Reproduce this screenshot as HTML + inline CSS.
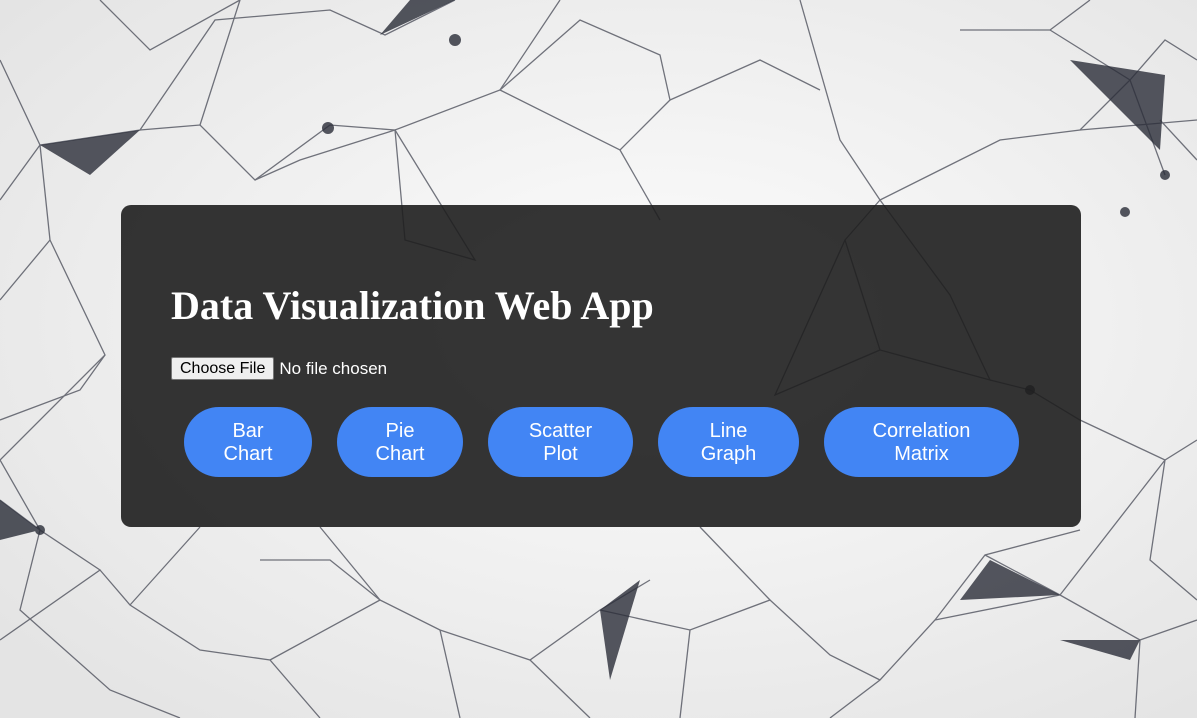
<!DOCTYPE html>
<html><head><meta charset="utf-8"><style>
html,body{margin:0;padding:0;width:1197px;height:718px;overflow:hidden;background:#f0f0f0;font-family:"Liberation Sans",Arial,sans-serif}
#bg{position:absolute;left:0;top:0}
.panel{position:absolute;left:121px;top:205px;width:960px;height:322px;background:rgba(30,30,30,0.9);border-radius:10px}
h1{position:absolute;left:50px;top:78px;margin:0;font-family:"Liberation Serif",serif;font-weight:bold;font-size:40px;color:#fff;line-height:46px;white-space:nowrap}
.file{position:absolute;left:50px;top:152px;font-size:17px;color:#fff;display:flex;align-items:center}
.file span.b{display:inline-block;background:#efefef;color:#000;border:1px solid #767676;border-radius:2px;padding:1px 8px;font-size:16px;line-height:19px;margin-right:5px}
.btn{position:absolute;top:202px;height:70px;background:#4285f4;border-radius:35px;color:#fff;font-size:20px;line-height:23px;text-align:center;display:flex;align-items:center;justify-content:center;padding-top:2px;box-sizing:border-box}
</style></head><body>
<svg id="bg" width="1197" height="718" viewBox="0 0 1197 718">
<defs><radialGradient id="g" cx="55%" cy="45%" r="70%"><stop offset="0" stop-color="#fdfdfd"/><stop offset="1" stop-color="#e4e4e4"/></radialGradient></defs>
<rect width="1197" height="718" fill="url(#g)"/>
<g stroke="#3a3d4a" stroke-width="1.3" fill="none" opacity="0.7">
<polyline points="0,60 40,145 140,130 215,20 330,10 385,35 455,0"/>
<polyline points="40,145 50,240 105,355 0,460 40,530 100,570 0,640"/>
<polyline points="140,130 200,125 255,180 330,125 395,130 500,90 560,0"/>
<polyline points="200,125 240,0 150,50 100,0"/>
<polyline points="395,130 475,260 405,240 395,130 300,160 255,180"/>
<polyline points="500,90 620,150 670,100 660,55 580,20 500,90"/>
<polyline points="620,150 660,220"/>
<polyline points="800,0 840,140 880,200 950,295 990,380 880,350 845,240 880,200"/>
<polyline points="845,240 775,395 880,350"/>
<polyline points="1050,30 1130,80 1080,130 1000,140 940,170 880,200"/>
<polyline points="1130,80 1165,40 1197,60"/>
<polyline points="1130,80 1165,175"/>
<polyline points="960,30 1050,30 1090,0"/>
<polyline points="990,380 1030,390 1080,420 1165,460 1197,440"/>
<polyline points="1080,530 985,555 935,620 880,680 830,718"/>
<polyline points="985,555 1060,595 1140,640 1197,620"/>
<polyline points="1060,595 1165,460"/>
<polyline points="1140,640 1135,718"/>
<polyline points="935,620 1060,595"/>
<polyline points="0,500 40,530 20,610 110,690 180,718"/>
<polyline points="100,570 130,605 200,650 270,660 320,718"/>
<polyline points="270,660 380,600 440,630 530,660 600,610 650,580"/>
<polyline points="440,630 460,718"/>
<polyline points="530,660 590,718"/>
<polyline points="600,610 690,630 770,600 830,655 880,680"/>
<polyline points="690,630 680,718"/>
<polyline points="320,527 380,600"/>
<polyline points="200,527 130,605"/>
<polyline points="700,527 770,600"/>
<polyline points="1197,160 1160,120"/>
<polyline points="0,300 50,240"/>
<polyline points="0,200 40,145"/>
<polyline points="670,100 760,60 820,90"/>
<polyline points="1080,130 1197,120"/>
<polyline points="0,420 80,390 105,355"/>
<polyline points="1165,460 1150,560 1197,600"/>
<polyline points="380,600 330,560 260,560"/>
</g>
<g fill="#2a2d38" opacity="0.8">
<polygon points="40,145 140,130 90,175"/>
<polygon points="380,35 455,0 410,0"/>
<polygon points="1070,60 1165,75 1160,150"/>
<polygon points="1060,640 1140,640 1130,660"/>
<polygon points="0,500 40,530 0,540"/>
<polygon points="600,610 640,580 610,680"/>
<polygon points="960,600 1060,595 990,560"/>
<circle cx="455" cy="40" r="6"/><circle cx="328" cy="128" r="6"/><circle cx="1165" cy="175" r="5"/>
<circle cx="1125" cy="212" r="5"/><circle cx="40" cy="530" r="5"/><circle cx="1030" cy="390" r="5"/>
</g>
</svg>
<div class="panel">
<h1>Data Visualization Web App</h1>
<div class="file"><span class="b">Choose File</span>No file chosen</div>
<div class="btn" style="left:63px;width:128px">Bar<br>Chart</div>
<div class="btn" style="left:216px;width:126px">Pie<br>Chart</div>
<div class="btn" style="left:367px;width:145px">Scatter<br>Plot</div>
<div class="btn" style="left:537px;width:141px">Line<br>Graph</div>
<div class="btn" style="left:703px;width:195px">Correlation<br>Matrix</div>
</div>
</body></html>
